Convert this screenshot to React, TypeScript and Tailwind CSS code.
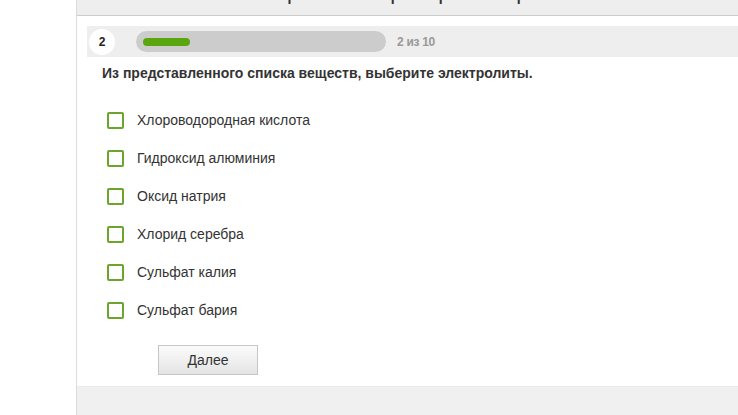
import { useState } from "react";

const options = [
  "Хлороводородная кислота",
  "Гидроксид алюминия",
  "Оксид натрия",
  "Хлорид серебра",
  "Сульфат калия",
  "Сульфат бария",
];

const App = () => {
  const [checked, setChecked] = useState<boolean[]>(options.map(() => false));

  const toggle = (i: number) =>
    setChecked((prev) => prev.map((v, j) => (j === i ? !v : v)));

  return (
    <div className="flex h-[415px] w-[738px] overflow-hidden bg-white font-['Liberation_Sans',Arial,sans-serif] text-[#333333]">
      <div className="w-[76px] shrink-0 bg-white" />

      <div className="flex min-w-0 flex-1 flex-col border-l border-[#dcdcdc]">
        {/* title bar, scrolled mostly out of view */}
        <div className="relative h-[16px] shrink-0 overflow-hidden border-b border-[#cccccc] bg-[#eeeeee]">
          <div className="absolute left-[150px] top-[-20px] whitespace-nowrap text-[22px] leading-[24px] text-[#333333]">
            Электролиты. Проверочная работа по теме «Электролитическая диссоциация»
          </div>
        </div>

        {/* progress */}
        <div className="ml-[10px] mt-[10px] flex h-[31px] shrink-0 items-center bg-[#eeeeee]">
          <div className="ml-[2px] flex h-[26px] w-[26px] items-center justify-center rounded-full bg-white text-[12px] font-bold text-[#222222]">
            2
          </div>
          <div className="ml-[21px] flex h-[21px] w-[250px] items-center rounded-full bg-[#cccccc] px-[7px]">
            <div className="h-[8px] w-[47px] rounded-full bg-[#5aa60e]" />
          </div>
          <span className="ml-[11px] text-[12px] font-bold tracking-[-0.3px] text-[#999999]">2 из 10</span>
        </div>

        {/* question */}
        <p className="ml-[25px] mt-[8px] text-[14px] font-bold leading-[16px] text-[#333333]">
          Из представленного списка веществ, выберите электролиты.
        </p>

        <ul className="ml-[30px] mt-[20px] flex flex-col">
          {options.map((opt, i) => (
            <li key={opt} className="flex h-[38px] items-center">
              <button
                type="button"
                onClick={() => toggle(i)}
                className="flex h-[17px] w-[17px] items-center justify-center rounded-[2px] border-2 border-[#6ba52b] bg-white"
              >
                {checked[i] && <span className="h-[7px] w-[7px] bg-[#6ba52b]" />}
              </button>
              <span className="ml-[13px] text-[14px] leading-[16px] text-[#333333]">{opt}</span>
            </li>
          ))}
        </ul>

        <div className="ml-[81px] mt-[16px]">
          <button
            type="button"
            className="h-[30px] w-[100px] border border-[#c6c6c6] bg-gradient-to-b from-[#fbfbfb] to-[#e4e4e4] text-[14px] text-[#333333]"
          >
            Далее
          </button>
        </div>

        <div className="mt-[11px] flex-1 border-t border-[#ebebeb] bg-[#f0f0f0]" />
      </div>
    </div>
  );
};

export default App;
